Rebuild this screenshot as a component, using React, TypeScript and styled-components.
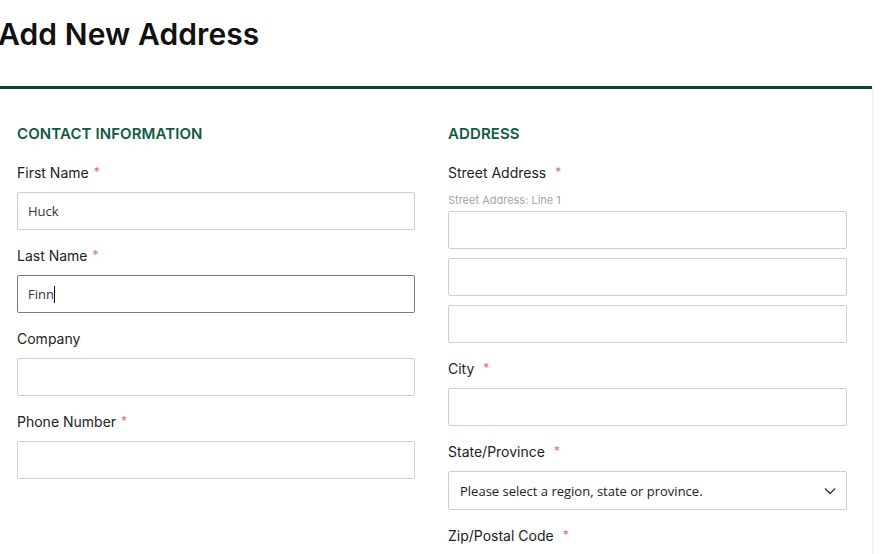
import React from "react";
import styled, { createGlobalStyle } from "styled-components";

const GlobalStyle = createGlobalStyle`
  html, body {
    margin: 0;
    padding: 0;
    background: #fff;
    overflow: hidden;
  }
  body {
    font-family: "Inter", "Noto Sans", sans-serif;
    color: #1f1f1f;
  }
`;

const Page = styled.div`
  margin-left: -20px;
  width: 892px;
`;

const Title = styled.h1`
  margin: 0;
  padding: 15px 0 0 18px;
  height: 86px;
  box-sizing: border-box;
  font-size: 30px;
  line-height: 38px;
  font-weight: 600;
  color: #111;
  letter-spacing: 0.1px;
`;

const Card = styled.div`
  border-top: 3px solid #0b4535;
  box-shadow: 1px 0 2px rgba(0, 0, 0, 0.08);
  background: #fff;
  padding: 35px 25px 40px 37px;
`;

const Columns = styled.div`
  display: grid;
  grid-template-columns: 398px 399px;
  column-gap: 33px;
  align-items: start;
`;

const Column = styled.div`
  display: flex;
  flex-direction: column;
`;

const SectionTitle = styled.h2`
  margin: 0 0 19px;
  font-size: 15px;
  line-height: 20px;
  font-weight: 600;
  color: #0f5a43;
  letter-spacing: 0.1px;
`;

const Field = styled.div`
  display: flex;
  flex-direction: column;
  margin-bottom: 16px;
`;

const Label = styled.label`
  font-size: 14px;
  line-height: 20px;
  color: #222;
  margin-bottom: 9px;
  display: flex;
  align-items: center;
`;

const Required = styled.span<{ $wide?: boolean }>`
  color: #e26d6a;
  font-size: 12px;
  margin-left: ${(p) => (p.$wide ? "9px" : "5px")};
  position: relative;
  top: -1px;
`;

const SubLabel = styled.span`
  font-size: 11px;
  line-height: 14px;
  color: #a6a6a6;
  margin: 1px 0 4px;
`;

const Stack = styled.div`
  display: flex;
  flex-direction: column;
  gap: 9px;
`;

const Input = styled.div<{ $focused?: boolean }>`
  box-sizing: border-box;
  height: 38px;
  border: 1px solid ${(p) => (p.$focused ? "#7a7a7a" : "#cfcfcf")};
  border-radius: 2px;
  padding: 0 10px;
  display: flex;
  align-items: center;
  font-family: "Open Sans", "Liberation Sans", sans-serif;
  font-size: 13px;
  color: #333;
  background: #fff;
`;

const Caret = styled.span`
  display: inline-block;
  width: 1px;
  height: 17px;
  background: #111;
`;

const Select = styled.div`
  box-sizing: border-box;
  height: 39px;
  border: 1px solid #cfcfcf;
  border-radius: 2px;
  padding: 0 10px 0 11px;
  display: flex;
  align-items: center;
  justify-content: space-between;
  font-family: "Open Sans", "Liberation Sans", sans-serif;
  font-size: 13px;
  color: #222;
`;

const Chevron = () => (
  <svg width="12" height="8" viewBox="0 0 12 8" fill="none">
    <path d="M1 1.5l5 5 5-5" stroke="#333" strokeWidth="1.3" />
  </svg>
);

type FieldProps = {
  label: string;
  required?: boolean;
  wide?: boolean;
  children: React.ReactNode;
};

const FormField = ({ label, required, wide, children }: FieldProps) => (
  <Field>
    <Label>
      {label}
      {required && <Required $wide={wide}>*</Required>}
    </Label>
    {children}
  </Field>
);

export default function App() {
  return (
    <>
      <GlobalStyle />
      <Page>
        <Title>Add New Address</Title>
        <Card>
          <Columns>
            <Column>
              <SectionTitle>CONTACT INFORMATION</SectionTitle>
              <FormField label="First Name" required>
                <Input>Huck</Input>
              </FormField>
              <FormField label="Last Name" required>
                <Input $focused>
                  Finn
                  <Caret />
                </Input>
              </FormField>
              <FormField label="Company">
                <Input />
              </FormField>
              <FormField label="Phone Number" required>
                <Input />
              </FormField>
            </Column>
            <Column>
              <SectionTitle>ADDRESS</SectionTitle>
              <FormField label="Street Address" required wide>
                <SubLabel>Street Address: Line 1</SubLabel>
                <Stack>
                  <Input />
                  <Input />
                  <Input />
                </Stack>
              </FormField>
              <FormField label="City" required wide>
                <Input />
              </FormField>
              <FormField label="State/Province" required wide>
                <Select>
                  Please select a region, state or province.
                  <Chevron />
                </Select>
              </FormField>
              <FormField label="Zip/Postal Code" required wide>
                <Input />
              </FormField>
            </Column>
          </Columns>
        </Card>
      </Page>
    </>
  );
}
